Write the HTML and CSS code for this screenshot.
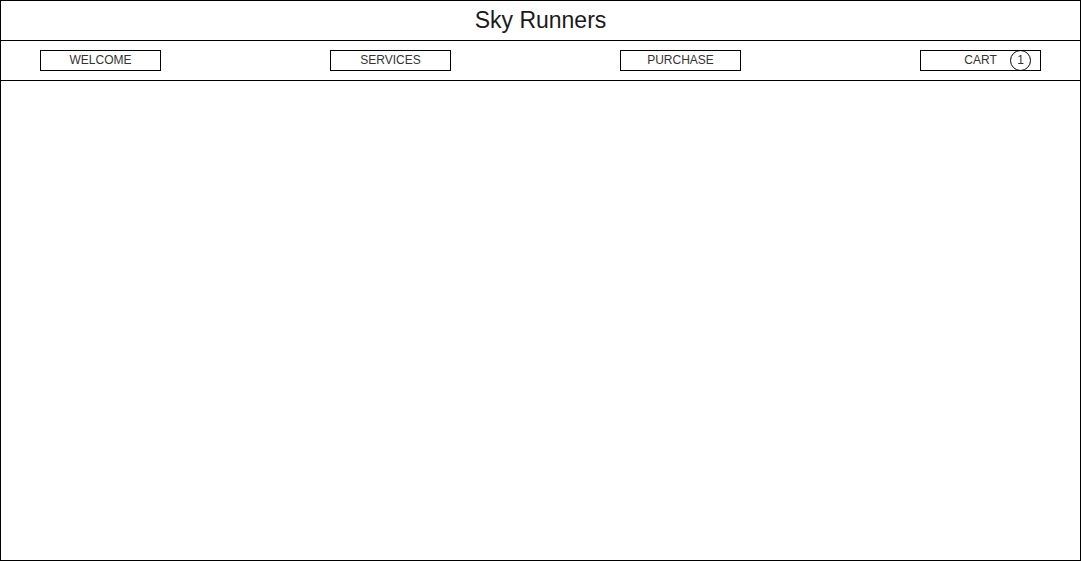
FILE: index.html
```html
<!DOCTYPE html>
<html>
<head>
<meta charset="utf-8">
<link rel="stylesheet" href="styles.css">
</head>
<body>
<div class="frame">
  <header class="header">Sky Runners</header>
  <nav class="nav">
    <div class="btn">WELCOME</div>
    <div class="btn">SERVICES</div>
    <div class="btn">PURCHASE</div>
    <div class="btn cart"><span class="cart-label">CART</span><span class="badge">1</span></div>
  </nav>
  <main class="content"></main>
</div>
</body>
</html>
```
FILE: styles.css
```css
html, body {
  margin: 0;
  padding: 0;
  background: #fff;
}
body {
  font-family: "Liberation Sans", Arial, sans-serif;
  color: #1a1a1a;
}
.frame {
  box-sizing: border-box;
  width: 1081px;
  height: 561px;
  border: 1px solid #000;
  display: flex;
  flex-direction: column;
}
.header {
  height: 39px;
  border-bottom: 1px solid #000;
  display: flex;
  align-items: center;
  justify-content: center;
  font-size: 23px;
  color: #1a1a1a;
}
.nav {
  box-sizing: border-box;
  height: 40px;
  border-bottom: 1px solid #000;
  display: flex;
  align-items: flex-start;
  padding: 9px 39px 0;
  gap: 169px;
}
.btn {
  box-sizing: border-box;
  width: 121px;
  height: 21px;
  padding-bottom: 2px;
  border: 1px solid #000;
  display: flex;
  align-items: center;
  justify-content: center;
  font-size: 12px;
  color: #333;
}
.cart {
  margin-left: 10px;
  position: relative;
}
.badge {
  position: absolute;
  left: 89px;
  top: -1px;
  box-sizing: border-box;
  width: 21px;
  height: 21px;
  padding-bottom: 2px;
  border: 1px solid #000;
  border-radius: 50%;
  display: flex;
  align-items: center;
  justify-content: center;
  font-size: 12px;
  color: #333;
}
.content {
  flex: 1;
}
```
